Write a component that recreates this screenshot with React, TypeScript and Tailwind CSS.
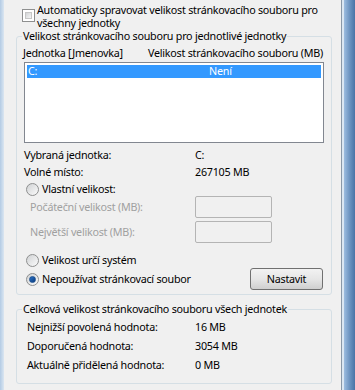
import React from "react";

function Checkbox() {
  return (
    <span className="block w-[13px] h-[13px] border border-[#8e8f8f] bg-white shrink-0 p-[2px]">
      <span className="block w-full h-full border border-[#c6c6c6] bg-gradient-to-br from-[#d2d4d6] to-[#f5f5f5]" />
    </span>
  );
}

function Radio({ checked }: { checked?: boolean }) {
  return (
    <span className="flex items-center justify-center w-[13px] h-[13px] rounded-full border border-[#8e8f8f] bg-gradient-to-br from-[#d0d2d4] to-[#fbfbfb] shrink-0">
      {checked && (
        <span className="block w-[7px] h-[7px] rounded-full bg-gradient-to-br from-[#2a73c9] to-[#0d3c7e] border border-[#1b4f8f]" />
      )}
    </span>
  );
}

export default function App() {
  return (
    <div
      className="w-[355px] h-[390px] flex overflow-hidden bg-[#f0f0f0] text-black text-[10.75px] leading-[14px] tracking-[-0.25px]"
      style={{ fontFamily: '"Noto Sans", "Segoe UI", sans-serif' }}
    >
      {/* left frame */}
      <div className="w-[4px] shrink-0 bg-gradient-to-r from-[#b3cbe4] to-[#dbe6f1]" />

      {/* client */}
      <div className="w-[337px] shrink-0 flex flex-col">
        {/* auto checkbox */}
        <div className="flex items-start pl-[18px] pt-[4px] h-[29px]">
          <div className="pt-[5px]">
            <Checkbox />
          </div>
          <div className="ml-[2px] leading-[12.5px]">
            <span className="block whitespace-nowrap">Automaticky spravovat velikost stránkovacího souboru pro</span>
            <span className="block whitespace-nowrap">všechny jednotky</span>
          </div>
        </div>

        {/* group 1 */}
        <fieldset className="ml-[12px] w-[316px] border border-[#d5dfe5] rounded-[3px] pb-[4px]">
          <legend className="ml-[5px] px-[1px] leading-[14px] whitespace-nowrap">
            Velikost stránkovacího souboru pro jednotlivé jednotky
          </legend>

          <div className="flex h-[14px] mt-[3px] pl-[6px] whitespace-nowrap">
            <span className="w-[125px]">Jednotka [Jmenovka]</span>
            <span>Velikost stránkovacího souboru (MB)</span>
          </div>

          <div className="mt-[2px] ml-[7px] w-[300px] h-[81px] border border-[#828790] bg-white p-[2px]">
            <div className="flex h-[13px] leading-[13px] bg-[#3399ff] text-white pl-[1px]">
              <span className="w-[181px]">C:</span>
              <span>Není</span>
            </div>
          </div>

          <div className="flex h-[14px] mt-[5px] pl-[7px]">
            <span className="w-[171px]">Vybraná jednotka:</span>
            <span>C:</span>
          </div>
          <div className="flex h-[14px] mt-[3px] pl-[7px]">
            <span className="w-[171px]">Volné místo:</span>
            <span>267105 MB</span>
          </div>

          <div className="flex items-center h-[14px] mt-[3px] pl-[9px] gap-[3px]">
            <Radio />
            <span>Vlastní velikost:</span>
          </div>

          <div className="flex items-center h-[22px] pl-[13px] text-[#a0a0a0]">
            <span className="w-[165px]">Počáteční velikost (MB):</span>
            <span className="block w-[77px] h-[22px] border border-[#b4b4b4] rounded-[2px] bg-[#f0f0f0]" />
          </div>
          <div className="flex items-center h-[22px] mt-[3px] pl-[13px] text-[#a0a0a0]">
            <span className="w-[165px]">Největší velikost (MB):</span>
            <span className="block w-[77px] h-[22px] border border-[#b4b4b4] rounded-[2px] bg-[#f0f0f0]" />
          </div>

          <div className="flex items-center h-[14px] mt-[10px] pl-[9px] gap-[3px]">
            <Radio />
            <span>Velikost určí systém</span>
          </div>

          <div className="flex items-center h-[22px] mt-[1px] pl-[9px]">
            <div className="flex items-center gap-[3px] w-[224px]">
              <Radio checked />
              <span>Nepoužívat stránkovací soubor</span>
            </div>
            <button className="w-[73px] h-[22px] border border-[#707070] rounded-[3px] bg-gradient-to-b from-[#f2f2f2] via-[#e6e6e6] to-[#cfcfcf] text-[10.75px] leading-[14px] tracking-[-0.25px]">
              Nastavit
            </button>
          </div>
        </fieldset>

        {/* group 2 */}
        <fieldset className="mt-[7px] ml-[12px] w-[316px] border border-[#d5dfe5] rounded-[3px] pb-[11px]">
          <legend className="ml-[5px] px-[1px] leading-[14px] whitespace-nowrap">
            Celková velikost stránkovacího souboru všech jednotek
          </legend>
          <div className="flex h-[14px] mt-[4px] pl-[10px]">
            <span className="w-[168px]">Nejnižší povolená hodnota:</span>
            <span>16 MB</span>
          </div>
          <div className="flex h-[14px] mt-[5px] pl-[10px]">
            <span className="w-[168px]">Doporučená hodnota:</span>
            <span>3054 MB</span>
          </div>
          <div className="flex h-[14px] mt-[5px] pl-[10px]">
            <span className="w-[168px]">Aktuálně přidělená hodnota:</span>
            <span>0 MB</span>
          </div>
        </fieldset>
      </div>

      {/* right frame */}
      <div className="flex-1 flex">
        <div className="w-[1px] bg-[#8a98a8]" />
        <div className="w-[2px] bg-[#dbe7f3]" />
        <div className="flex-1 bg-gradient-to-r from-[#9dbde0] via-[#6e95c2] to-[#4b73a6]" />
      </div>
    </div>
  );
}
